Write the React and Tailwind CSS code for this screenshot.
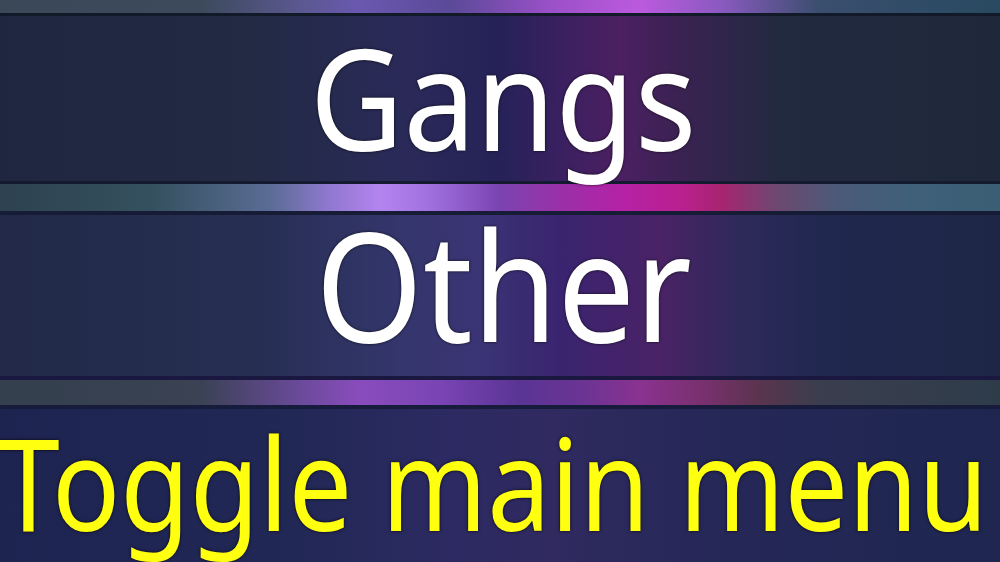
export default function App() {
  const font = { fontFamily: '"Noto Sans", "Open Sans", sans-serif' };
  return (
    <div className="w-[1000px] h-[562px] overflow-hidden flex flex-col bg-[#1f2548]" style={font}>
      {/* top separator */}
      <div className="h-[13px] shrink-0 bg-[linear-gradient(90deg,#3a4858_0%,#3c4a5c_20%,#5a5890_30%,#6a58b0_36%,#5a4a98_45%,#9a50c8_55%,#bc5ade_64%,#8a5ac0_72%,#3a4e6e_82%,#284a60_100%)]" />
      <div className="h-[3px] shrink-0 bg-[#121a2a]" />
      {/* Gangs */}
      <div className="h-[165px] shrink-0 flex items-center justify-center bg-[linear-gradient(90deg,#1f2640_0%,#222a44_25%,#2a2a58_40%,#262258_50%,#3a2060_56%,#4c2062_62%,#3a2252_68%,#222a40_78%,#1e283a_100%)]">
        <span className="text-white text-[140px] leading-none inline-block whitespace-nowrap scale-x-[0.92] ml-[6px] mt-[-4px] [text-shadow:0_0_3px_rgba(0,0,0,0.8)]">Gangs</span>
      </div>
      <div className="h-[3px] shrink-0 bg-[#141a30]" />
      {/* middle separator */}
      <div className="h-[27px] shrink-0 bg-[linear-gradient(90deg,#2e4250_0%,#34505e_15%,#5a6c94_27%,#9078d0_33%,#b484ee_38%,#a070e0_43%,#7a44b0_50%,#9a30a8_56%,#b422a6_62%,#ba2090_68%,#a82470_72%,#6a4a70_78%,#4a5a78_84%,#3e6078_92%,#3c5e74_100%)]" />
      <div className="h-[4px] shrink-0 bg-[#161c36]" />
      {/* Other */}
      <div className="h-[161px] shrink-0 flex items-center justify-center bg-[linear-gradient(90deg,#222a48_0%,#262e52_25%,#34366c_40%,#3a3474_48%,#3a2470_56%,#4a2266_66%,#2e2a5a_74%,#202850_82%,#1e2646_100%)]">
        <span className="text-white text-[151px] leading-none inline-block whitespace-nowrap scale-x-[0.91] ml-[8px] mt-[-24px] [text-shadow:0_0_3px_rgba(0,0,0,0.8)]">Other</span>
      </div>
      <div className="h-[4px] shrink-0 bg-[#1a1840]" />
      {/* bottom separator */}
      <div className="h-[25px] shrink-0 bg-[linear-gradient(90deg,#34404e_0%,#3a4254_20%,#6a4a9a_30%,#8a4cbc_36%,#7a44b4_44%,#5a3494_52%,#6a3494_58%,#8a3290_64%,#7a3070_70%,#5a344e_76%,#3a3e4e_82%,#2e3c4a_100%)]" />
      <div className="h-[4px] shrink-0 bg-[#181c3c]" />
      {/* Toggle */}
      <div className="flex-1 overflow-hidden bg-[linear-gradient(90deg,#1e2450_0%,#222856_30%,#2c2a62_45%,#302a60_55%,#262858_70%,#1e2650_100%)] pt-[8px]">
        <span className="text-[#ffff10] text-[113px] leading-none inline-block whitespace-nowrap origin-top-left scale-y-[1.14] ml-[-3px] [text-shadow:0_0_3px_rgba(0,0,0,0.9)]">Toggle main menu</span>
      </div>
    </div>
  );
}
